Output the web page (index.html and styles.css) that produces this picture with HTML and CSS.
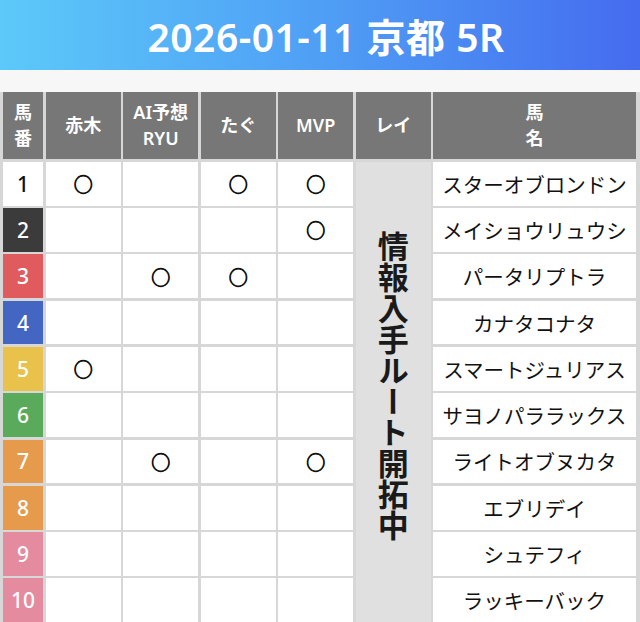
FILE: index.html
```html
<!DOCTYPE html>
<html lang="ja">
<head>
<meta charset="utf-8">
<title>2026-01-11 京都 5R</title>
<link rel="stylesheet" href="styles.css">
</head>
<body>
<header class="title-bar"><h1 class="title">2026-01-11 京都 5R</h1></header>
<div class="spacer"></div>
<div class="table">
  <div class="th"><span>馬</span><span>番</span></div>
  <div class="th">赤木</div>
  <div class="th"><span>AI予想</span><span>RYU</span></div>
  <div class="th">たぐ</div>
  <div class="th">MVP</div>
  <div class="th">レイ</div>
  <div class="th"><span>馬</span><span>名</span></div>

  <div class="num f1">1</div><div class="td mark">○</div><div class="td"></div><div class="td mark">○</div><div class="td mark">○</div>
  <div class="rei"><span class="rei-text">情報入手ルート開拓中</span></div>
  <div class="td name">スターオブロンドン</div>

  <div class="num f2">2</div><div class="td"></div><div class="td"></div><div class="td"></div><div class="td mark">○</div><div class="td name">メイショウリュウシ</div>
  <div class="num f3">3</div><div class="td"></div><div class="td mark">○</div><div class="td mark">○</div><div class="td"></div><div class="td name">パータリプトラ</div>
  <div class="num f4">4</div><div class="td"></div><div class="td"></div><div class="td"></div><div class="td"></div><div class="td name">カナタコナタ</div>
  <div class="num f5">5</div><div class="td mark">○</div><div class="td"></div><div class="td"></div><div class="td"></div><div class="td name">スマートジュリアス</div>
  <div class="num f6">6</div><div class="td"></div><div class="td"></div><div class="td"></div><div class="td"></div><div class="td name">サヨノパララックス</div>
  <div class="num f7">7</div><div class="td"></div><div class="td mark">○</div><div class="td"></div><div class="td mark">○</div><div class="td name">ライトオブヌカタ</div>
  <div class="num f7">8</div><div class="td"></div><div class="td"></div><div class="td"></div><div class="td"></div><div class="td name">エブリデイ</div>
  <div class="num f8">9</div><div class="td"></div><div class="td"></div><div class="td"></div><div class="td"></div><div class="td name">シュテフィ</div>
  <div class="num f8">10</div><div class="td"></div><div class="td"></div><div class="td"></div><div class="td"></div><div class="td name">ラッキーバック</div>
</div>
</body>
</html>
```
FILE: styles.css
```css
html, body {
  margin: 0;
  padding: 0;
  overflow: hidden;
  background: #ffffff;
  font-family: "Noto Sans CJK JP", "Noto Sans", sans-serif;
}
.title-bar {
  height: 70px;
  background: linear-gradient(90deg, #5cc9f9 0%, #4f9ff5 50%, #456bef 100%);
  display: flex;
  align-items: center;
  justify-content: center;
  padding-left: 12px;
}
.title {
  margin: 0;
  color: #ffffff;
  font-family: "Noto Sans", "Noto Sans CJK JP", sans-serif;
  font-size: 39px;
  font-weight: 600;
  letter-spacing: 0.5px;
  line-height: 1;
  padding-top: 2px;
}
.spacer {
  height: 21.7px;
  background: #f7f7f7;
}
.table {
  display: grid;
  grid-template-columns: 40.5px repeat(5, 75px) 202.5px;
  grid-template-rows: 67.6px repeat(10, 43.8px);
  gap: 2.5px;
  padding: 0 4.3px 0 2.7px;
  background: #d7d7d7;
  width: 640px;
  box-sizing: border-box;
}
.th {
  background: #777777;
  color: #ffffff;
  font-family: "Noto Sans", "Noto Sans CJK JP", sans-serif;
  font-size: 18px;
  font-weight: 600;
  line-height: 26px;
  display: flex;
  flex-direction: column;
  align-items: center;
  justify-content: center;
  text-align: center;
}
.td {
  background: #ffffff;
  display: flex;
  align-items: center;
  justify-content: center;
  color: #111111;
}
.mark {
  font-size: 19px;
  line-height: 1;
  -webkit-text-stroke: 0.9px #111111;
}
.name {
  font-size: 20.5px;
  white-space: nowrap;
}
.num {
  display: flex;
  align-items: center;
  justify-content: center;
  font-family: "Noto Sans", sans-serif;
  font-size: 21px;
  font-weight: 500;
  color: #ffffff;
}
.f1 { background: #ffffff; color: #111111; }
.f2 { background: #3b3b3b; }
.f3 { background: #df5b5e; }
.f4 { background: #4266c2; }
.f5 { background: #e8c24a; }
.f6 { background: #5aaa5c; }
.f7 { background: #e59a4c; }
.f8 { background: #e58ba0; }
.rei {
  grid-column: 6;
  grid-row: 2 / span 10;
  background: #e0e0e0;
  text-align: center;
  padding-top: 69px;
}
.rei-text {
  display: inline-block;
  writing-mode: vertical-rl;
  text-orientation: upright;
  font-size: 31px;
  font-weight: 700;
  color: #1a1a1a;
  line-height: 1;
}
```
